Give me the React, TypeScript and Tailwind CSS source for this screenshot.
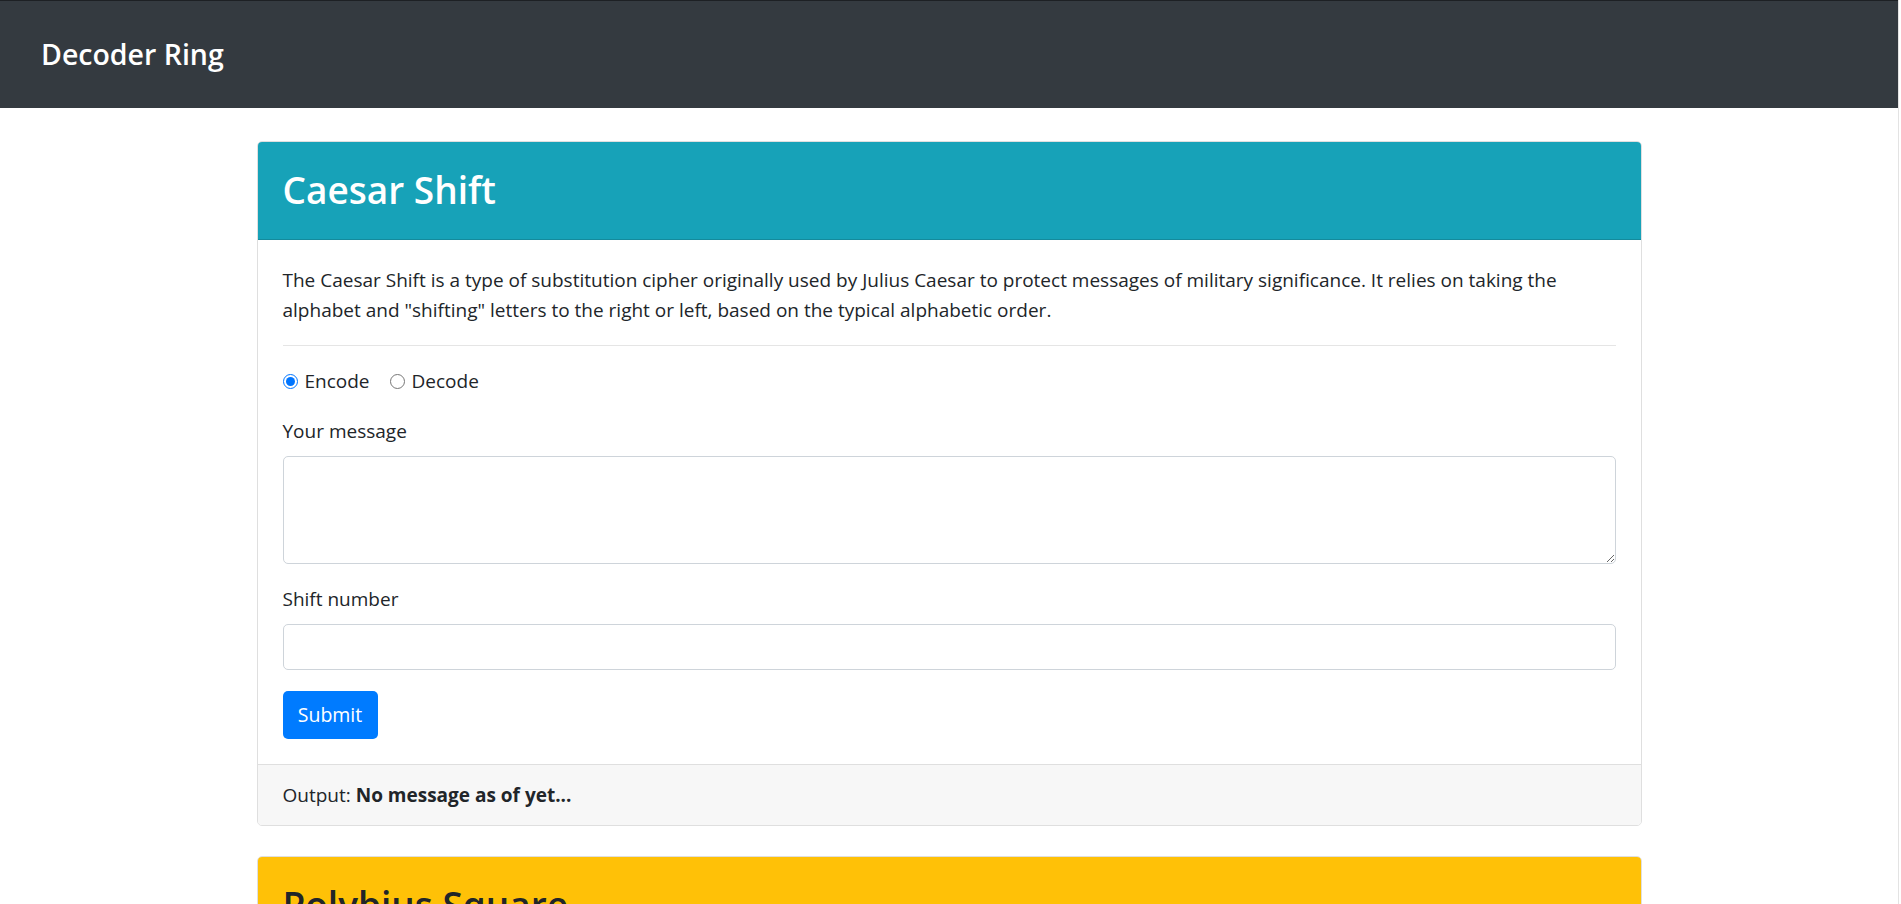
import { useState } from "react";

const font = { fontFamily: '"Open Sans", "Noto Sans", sans-serif' };

const Caesar = () => {
    const [mode, setMode] = useState("encode")

    return (
        <div className="w-[1385px] mx-auto rounded-[5px] border border-[#dfdfdf] overflow-hidden">
            {/* header */}
            <div className="bg-[#17a2b8] border-b border-[#148a9c] px-[25px] pt-[24px] pb-[25px]">
                <h2 className="text-[37px] leading-[48px] font-semibold text-white">Caesar Shift</h2>
            </div>

            {/* body */}
            <div className="px-[25px] pt-[25px] pb-[25px] text-[#212529] text-[19px]">
                <p className="leading-[30px]">
                    The Caesar Shift is a type of substitution cipher originally used by Julius Caesar to protect messages of military significance. It relies on taking the alphabet and "shifting" letters to the right or left, based on the typical alphabetic order.
                </p>
                <hr className="my-[20px] border-t border-[#e5e5e5]" />

                <div className="flex items-center h-[30px]">
                    <label className="flex items-center gap-[7px] mr-[20px]">
                        <input type="radio" name="mode" checked={mode === "encode"} onChange={() => setMode("encode")} className="w-[15px] h-[15px] m-0 accent-[#0075ff]" />
                        Encode
                    </label>
                    <label className="flex items-center gap-[7px]">
                        <input type="radio" name="mode" checked={mode === "decode"} onChange={() => setMode("decode")} className="w-[15px] h-[15px] m-0 accent-[#0075ff]" />
                        Decode
                    </label>
                </div>

                <div className="mt-[20px]">
                    <label className="block leading-[30px] mb-[10px]">Your message</label>
                    <textarea rows={3} className="block w-full h-[108px] rounded-[5px] border border-[#ced4da] px-[15px] py-[8px]"></textarea>
                </div>

                <div className="mt-[20px]">
                    <label className="block leading-[30px] mb-[10px]">Shift number</label>
                    <input type="number" className="block w-full h-[46px] rounded-[5px] border border-[#ced4da] px-[15px]" />
                </div>

                <button className="mt-[21px] w-[95px] h-[48px] rounded-[5px] bg-[#007bff] text-white text-[19.5px]">Submit</button>
            </div>

            {/* output */}
            <div className="bg-[#f7f7f7] border-t border-[#dfdfdf] px-[25px] py-[15px] text-[19px] leading-[30px] text-[#212529]">
                Output: <strong className="font-bold">No message as of yet...</strong>
            </div>
        </div>
    )
}

const Polybius = () => {
    return (
        <div className="w-[1385px] mx-auto mt-[30px] rounded-[5px] border border-[#dfdfdf] overflow-hidden">
            <div className="bg-[#ffc107] border-b border-[#dfa906] px-[25px] pt-[24px] pb-[25px]">
                <h2 className="text-[37px] leading-[48px] font-semibold text-[#212529]">Polybius Square</h2>
            </div>
            <div className="h-[300px]"></div>
        </div>
    )
}

export default function App() {
    return (
        <div className="flex bg-white" style={font}>
            <div className="w-[1899px] min-h-screen border-r border-[#e3e3e3]">
                {/* nav */}
                <nav className="h-[108px] bg-[#343a40] border-t border-[#1d2024] flex items-center px-[41px]">
                    <span className="text-white text-[28.5px] font-semibold">Decoder Ring</span>
                </nav>

                <main className="pt-[33px] pb-[40px]">
                    <Caesar />
                    <Polybius />
                </main>
            </div>
        </div>
    )
}
